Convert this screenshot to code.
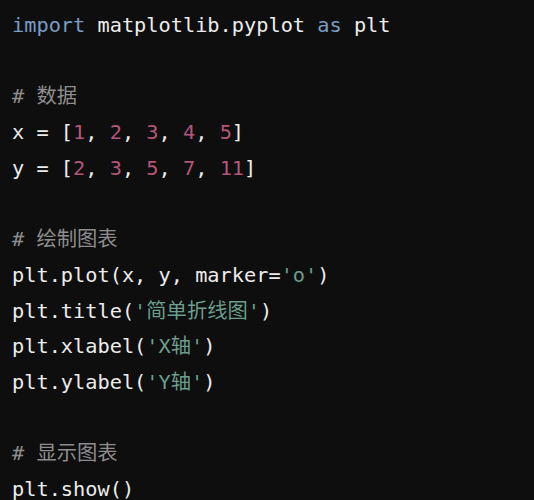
import React from 'react';

type Tok = { t: string; c?: string };

const KW = 'text-[#7b9cc4]';
const NUM = 'text-[#b4557a]';
const STR = 'text-[#6b9e8c]';
const COM = 'text-[#8d8d8d]';

const lines: Tok[][] = [
  [{ t: 'import', c: KW }, { t: ' matplotlib.pyplot ' }, { t: 'as', c: KW }, { t: ' plt' }],
  [],
  [{ t: '# 数据', c: COM }],
  [
    { t: 'x = [' },
    { t: '1', c: NUM }, { t: ', ' },
    { t: '2', c: NUM }, { t: ', ' },
    { t: '3', c: NUM }, { t: ', ' },
    { t: '4', c: NUM }, { t: ', ' },
    { t: '5', c: NUM }, { t: ']' },
  ],
  [
    { t: 'y = [' },
    { t: '2', c: NUM }, { t: ', ' },
    { t: '3', c: NUM }, { t: ', ' },
    { t: '5', c: NUM }, { t: ', ' },
    { t: '7', c: NUM }, { t: ', ' },
    { t: '11', c: NUM }, { t: ']' },
  ],
  [],
  [{ t: '# 绘制图表', c: COM }],
  [{ t: 'plt.plot(x, y, marker=' }, { t: "'o'", c: STR }, { t: ')' }],
  [{ t: 'plt.title(' }, { t: "'简单折线图'", c: STR }, { t: ')' }],
  [{ t: 'plt.xlabel(' }, { t: "'X轴'", c: STR }, { t: ')' }],
  [{ t: 'plt.ylabel(' }, { t: "'Y轴'", c: STR }, { t: ')' }],
  [],
  [{ t: '# 显示图表', c: COM }],
  [{ t: 'plt.show()' }],
];

export default function App() {
  return (
    <div className="w-[534px] h-[500px] overflow-hidden bg-[#0e0e0e] pl-[12px] pt-[8px]">
      <pre
        className="text-[20.3px] leading-[35.7px] text-[#ececec]"
        style={{ fontFamily: '"DejaVu Sans Mono", "Noto Sans CJK SC", monospace' }}
      >
        {lines.map((line, i) => (
          <div key={i} className="h-[35.7px] whitespace-pre">
            {line.map((tok, j) => (
              <span key={j} className={tok.c}>{tok.t}</span>
            ))}
          </div>
        ))}
      </pre>
    </div>
  );
}
